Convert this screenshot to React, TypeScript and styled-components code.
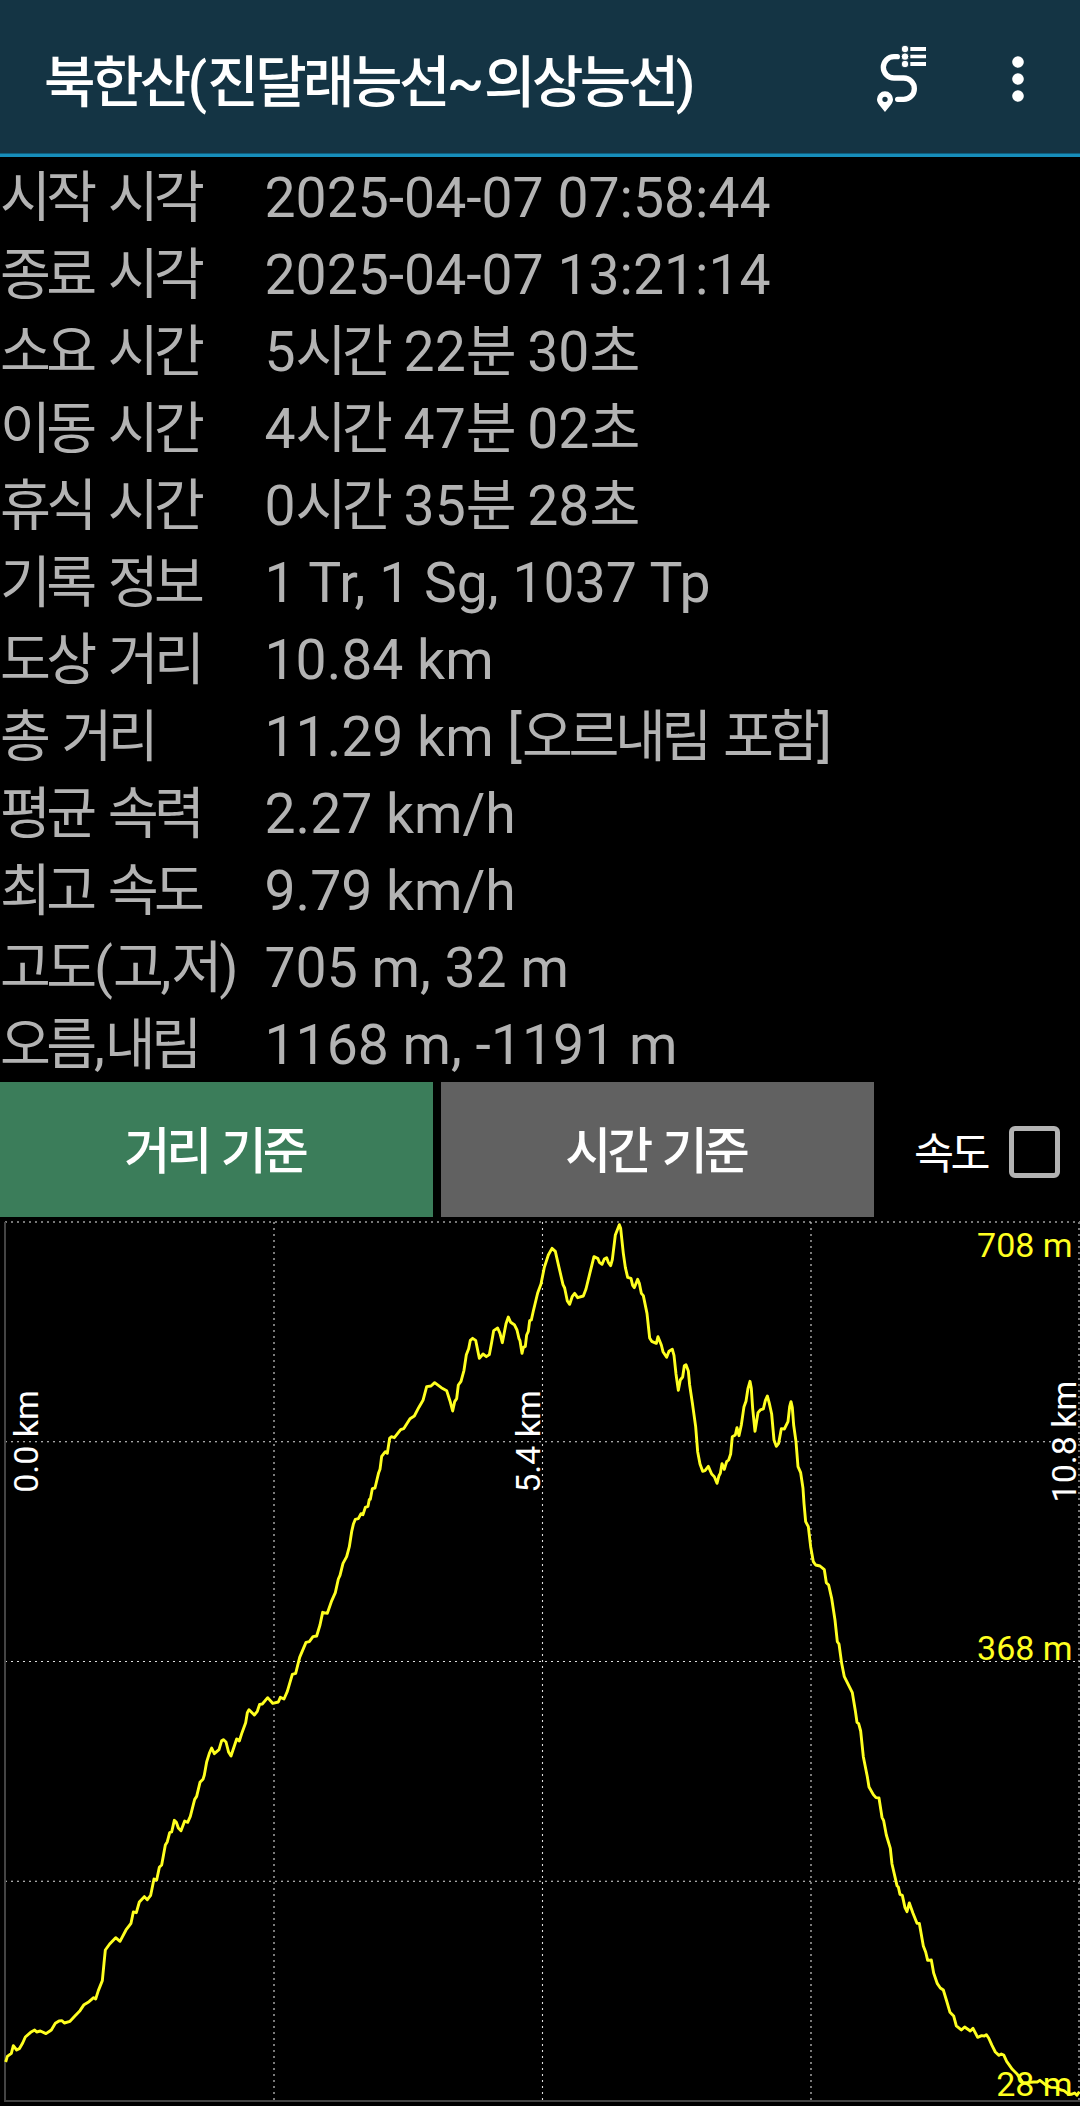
import React from "react";
import styled, { createGlobalStyle } from "styled-components";

const GlobalStyle = createGlobalStyle`
  * { box-sizing: border-box; }
  body {
    margin: 0;
    background: #000;
    font-family: Roboto, "Noto Sans CJK KR", sans-serif;
  }
`;

const Screen = styled.main`
  display: flex;
  flex-direction: column;
  width: 1080px;
  height: 2106px;
  overflow: hidden;
  background: #000;
`;

const ActionBar = styled.header`
  display: flex;
  align-items: center;
  flex: none;
  height: 157px;
  padding: 6px 52px 0 44px;
  background: #143444;
  border-bottom: 3px solid #178ebb;
  box-shadow: inset 0 -1px #10607f;
`;

const Title = styled.h1`
  flex: 1;
  margin: 0;
  padding-top: 5px;
  color: #fff;
  font-size: 56px;
  font-weight: 500;
  line-height: 80px;
  white-space: nowrap;
`;

const IconButton = styled.button<{ $gap?: number }>`
  display: flex;
  padding: 0;
  margin-left: ${(p) => p.$gap ?? 0}px;
  border: 0;
  background: none;
`;

const Hangul = styled.span<{ $tracking: number; $after: number }>`
  margin-right: ${(p) => p.$after}em;
  font-family: "Noto Sans CJK KR", sans-serif;
  letter-spacing: ${(p) => p.$tracking}em;
  line-height: 0;
`;

const Stats = styled.dl`
  display: flex;
  flex-direction: column;
  flex: none;
  height: 925px;
  margin: 0;
  padding-top: 3px;
`;

const StatRow = styled.div`
  display: grid;
  flex: none;
  grid-template-columns: 264.5px 1fr;
  height: 77px;
  color: #b3b3b3;
  font-size: 55.3px;
  line-height: 77px;
  white-space: nowrap;
`;

const StatLabel = styled.dt`
  margin: 0;
`;

const StatValue = styled.dd`
  margin: 0;
`;

const Controls = styled.div`
  display: flex;
  flex: none;
  gap: 8px;
  height: 135px;
`;

const ModeButton = styled.button<{ $active?: boolean }>`
  width: 433px;
  padding: 6px 4px 0 0;
  border: 0;
  background: ${(p) => (p.$active ? "#3b7d5a" : "#616161")};
  color: #fff;
  font-family: inherit;
  font-size: 50px;
  font-weight: 500;
  line-height: 129px;
`;

const SpeedToggle = styled.label`
  display: flex;
  flex: 1;
  align-items: center;
  justify-content: flex-end;
  gap: 22px;
  padding: 4px 20px 0 0;
  color: #fff;
  font-size: 43.5px;
`;

const ToggleText = styled.span`
  padding-top: 5px;
`;

const CheckBox = styled.span`
  width: 51px;
  height: 52px;
  border: 5px solid #b3b3b3;
  border-radius: 6px;
`;

const Chart = styled.svg`
  display: block;
  flex: none;
`;

const AxisText = styled.text<{ $color: string }>`
  fill: ${(p) => p.$color};
  font-family: Roboto, sans-serif;
  font-size: 34px;
`;

/* Hangul syllables are set a little tighter than the font's own advance. */
function Mixed({
  text,
  tracking = -0.08,
  after = 0,
}: {
  text: string;
  tracking?: number;
  after?: number;
}) {
  return (
    <>
      {text.split(/([가-힣]+)/).map((run, i) =>
        i % 2 ? (
          <Hangul key={i} $tracking={tracking} $after={after}>
            {run}
          </Hangul>
        ) : (
          run
        ),
      )}
    </>
  );
}

function RouteListIcon() {
  return (
    <svg width="60" height="80" viewBox="102 60 180 240" fill="#fff">
      <path
        d="M172 110H162A32 32 0 0 0 162 174H191A32 32 0 0 1 191 238H173"
        fill="none"
        stroke="#fff"
        strokeWidth="16"
        strokeLinecap="round"
      />
      <g stroke="#143444" strokeWidth="3">
        <circle cx="195" cy="87" r="11.5" />
        <circle cx="195" cy="110" r="11.5" />
        <circle cx="195" cy="132" r="11.5" />
      </g>
      <path d="M211 81h47v12h-47zM211 104h47v11h-47zM211 126h47v12h-47z" />
      <path
        fillRule="evenodd"
        d="M135 276L118 255C114 250 111 245 111 238A24 24 0 0 1 159 238C159 245 156 250 152 255ZM135 230A8 8 0 1 0 135 246A8 8 0 1 0 135 230Z"
      />
    </svg>
  );
}

function MoreIcon() {
  return (
    <svg width="20" height="80" viewBox="504 60 60 240" fill="#fff">
      <circle cx="534" cy="126" r="17.5" />
      <circle cx="534" cy="177" r="17.5" />
      <circle cx="534" cy="228" r="17.5" />
    </svg>
  );
}

const stats: [string, string][] = [
  ["시작 시각", "2025-04-07 07:58:44"],
  ["종료 시각", "2025-04-07 13:21:14"],
  ["소요 시간", "5시간 22분 30초"],
  ["이동 시간", "4시간 47분 02초"],
  ["휴식 시간", "0시간 35분 28초"],
  ["기록 정보", "1 Tr, 1 Sg, 1037 Tp"],
  ["도상 거리", "10.84 km"],
  ["총 거리", "11.29 km [오르내림 포함]"],
  ["평균 속력", "2.27 km/h"],
  ["최고 속도", "9.79 km/h"],
  ["고도(고,저)", "705 m, 32 m"],
  ["오름,내림", "1168 m, -1191 m"],
];

/* Elevation profile in thirds of a pixel, from the chart's top left corner. */
const profile = `
17,2535 22,2518 34,2509 40,2486 50,2499 58,2495 68,2478 76,2460 92,2446 104,2439
110,2445 121,2442 138,2450 154,2439 166,2419 177,2412 186,2411 193,2418 210,2413 224,2398
240,2381 252,2363 267,2354 281,2342 287,2346 295,2321 307,2291 312,2239 316,2199 329,2181
347,2162 360,2173 378,2139 393,2119 400,2085 409,2087 418,2055 433,2039 442,2048 452,2035
462,1986 470,1989 478,1951 485,1944 496,1884 502,1874 509,1847 515,1845 523,1810 529,1816
535,1833 543,1841 554,1812 563,1816 571,1798 584,1747 590,1738 600,1696 609,1687 613,1674
620,1635 628,1609 635,1593 643,1610 657,1598 665,1571 670,1568 678,1575 686,1606 693,1617
710,1566 718,1572 726,1547 737,1517 742,1487 747,1478 763,1494 772,1483 779,1462 787,1461
803,1442 818,1459 835,1455 841,1441 852,1446 862,1423 877,1372 887,1369 899,1321 918,1276
928,1274 939,1259 950,1257 960,1224 968,1186 982,1189 994,1154 1006,1127 1015,1086 1020,1075
1029,1039 1040,1019 1048,989 1055,944 1060,922 1066,907 1075,905 1083,890 1089,893 1096,871
1104,868 1108,847 1111,847 1117,815 1125,813 1136,767 1140,757 1145,718 1156,704 1162,709
1169,664 1174,659 1183,662 1202,638 1211,635 1230,605 1243,597 1256,572 1269,550 1280,509
1293,507 1304,497 1324,512 1340,521 1350,552 1358,582 1364,554 1370,545 1375,504 1383,493
1392,460 1399,413 1406,395 1411,370 1418,364 1427,370 1438,424 1449,411 1459,419 1468,413
1475,376 1481,341 1493,333 1500,349 1507,377 1518,320 1525,300 1532,316 1543,323 1551,339
1557,365 1560,371 1566,409 1570,391 1576,388 1580,354 1585,343 1589,311 1594,309 1600,282
1613,228 1623,201 1633,151 1645,114 1656,94 1666,103 1677,151 1689,203 1694,213 1702,252
1709,262 1717,238 1724,229 1733,242 1750,237 1758,216 1770,167 1782,119 1794,125 1798,136
1806,142 1813,126 1820,122 1825,136 1832,146 1837,128 1846,54 1858,23 1862,34 1870,109
1876,151 1883,181 1893,184 1898,205 1903,212 1913,187 1918,199 1924,229 1930,236 1941,289
1949,363 1955,373 1969,379 1974,359 1984,384 1989,404 2000,421 2007,403 2017,397 2022,415
2028,471 2035,520 2041,489 2048,480 2053,446 2058,443 2065,462 2069,504 2077,557 2087,629
2093,704 2100,741 2108,763 2115,761 2125,748 2135,771 2143,779 2151,799 2157,776 2161,769
2166,740 2173,757 2180,734 2186,729 2192,711 2197,659 2206,654 2211,632 2217,656 2224,624
2232,569 2238,553 2244,514 2250,493 2254,514 2258,574 2265,643 2274,587 2281,579 2290,576
2296,551 2302,537 2308,559 2315,591 2322,669 2329,688 2336,679 2344,635 2353,636 2364,614
2369,569 2373,554 2377,572 2381,624 2388,674 2394,749 2402,767 2409,814 2412,859 2417,914
2425,929 2432,989 2440,1034 2447,1044 2460,1047 2473,1058 2479,1097 2486,1104 2495,1144
2505,1209 2512,1274 2517,1281 2525,1339 2533,1379 2557,1427 2566,1481 2571,1516 2576,1520
2582,1542 2590,1619 2602,1679 2607,1710 2620,1733 2628,1742 2637,1743 2646,1801 2651,1811
2659,1854 2671,1894 2676,1941 2686,1984 2691,2006 2695,2010 2700,2032 2707,2035 2715,2072
2721,2084 2728,2058 2739,2089 2751,2119 2758,2119 2770,2187 2777,2205 2783,2230 2794,2229
2801,2268 2812,2300 2821,2313 2830,2319 2840,2352 2850,2386 2861,2397 2869,2427 2884,2439
2894,2430 2911,2442 2919,2434 2933,2461 2945,2456 2953,2457 2959,2453 2966,2463 2976,2485
2986,2505 2997,2515 3004,2511 3011,2514 3020,2533 3037,2557 3052,2572 3068,2596 3085,2597
3100,2595 3112,2595 3120,2590 3136,2603 3152,2611 3170,2612 3183,2619 3192,2621 3206,2632
3214,2632 3224,2628 3231,2635 3238,2624`;

const distanceLabels = [
  { x: 38, text: "0.0 km" },
  { x: 540, text: "5.4 km" },
  { x: 1076, text: "10.8 km" },
];

const heightLabels = [
  { y: 40, text: "708 m" },
  { y: 443, text: "368 m" },
  { y: 879, text: "28 m" },
];

function ElevationChart() {
  return (
    <Chart width="1080" height="889" viewBox="0 0 1080 889">
      <g fill="none" strokeDasharray="2 4">
        <path d="M5 5H1080M1079 5V884" stroke="#777" strokeWidth="2" />
        <path
          d="M5 224.75H1080M5 444.5H1080M5 664.25H1080M274 5V884M542.5 5V884M811 5V884"
          stroke="#ddd"
          strokeWidth="1.1"
        />
      </g>
      <path d="M5 5V884H1080" fill="none" stroke="#444" strokeWidth="2" />
      {distanceLabels.map((l) => (
        <AxisText
          key={l.text}
          $color="#fff"
          textAnchor="middle"
          transform={`translate(${l.x} 224.5) rotate(-90)`}
        >
          {l.text}
        </AxisText>
      ))}
      {heightLabels.map((l) => (
        <AxisText key={l.text} $color="#ffff20" x="1072.7" y={l.y} textAnchor="end">
          {l.text}
        </AxisText>
      ))}
      <polyline
        points={profile}
        transform="scale(0.33333)"
        fill="none"
        stroke="#ffff20"
        strokeWidth="8.7"
        strokeLinejoin="round"
      />
    </Chart>
  );
}

export default function App() {
  return (
    <Screen>
      <GlobalStyle />
      <ActionBar>
        <Title>
          <Mixed text="북한산(진달래능선~의상능선)" tracking={-0.064} />
        </Title>
        <IconButton aria-label="경로 목록">
          <RouteListIcon />
        </IconButton>
        <IconButton $gap={74} aria-label="더보기">
          <MoreIcon />
        </IconButton>
      </ActionBar>
      <Stats>
        {stats.map(([label, value]) => (
          <StatRow key={label}>
            <StatLabel>
              <Mixed text={label} tracking={-0.083} after={0.025} />
            </StatLabel>
            <StatValue>
              <Mixed text={value} after={0.025} />
            </StatValue>
          </StatRow>
        ))}
      </Stats>
      <Controls>
        <ModeButton $active>
          <Mixed text="거리 기준" />
        </ModeButton>
        <ModeButton>
          <Mixed text="시간 기준" />
        </ModeButton>
        <SpeedToggle>
          <ToggleText>
            <Mixed text="속도" />
          </ToggleText>
          <CheckBox />
        </SpeedToggle>
      </Controls>
      <ElevationChart />
    </Screen>
  );
}
